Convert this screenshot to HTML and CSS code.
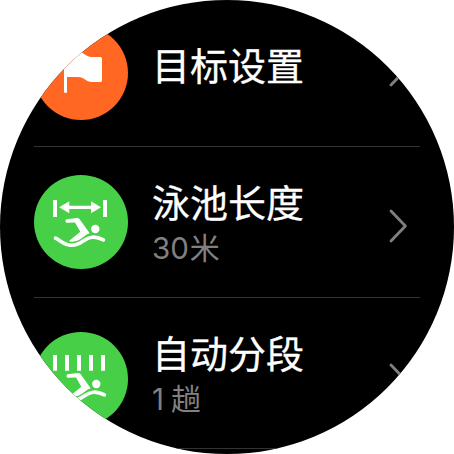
FILE: index.html
```html
<!DOCTYPE html>
<html lang="zh-CN">
<head>
<meta charset="utf-8">
<title>游泳设置</title>
<link rel="stylesheet" href="styles.css">
</head>
<body>
<main class="watch">
  <section class="row row-goal">
    <svg class="icon" viewBox="0 0 94 94">
      <circle class="orange" cx="47" cy="47" r="47"/>
      <path class="white" d="M30 22H44L47.5 26.3C51.5 28.8 53.5 31 57 31H66.5Q68 31 68 32.5V54.5Q68 56 66.5 56H58C52 56 50 51 44 51H33V66Q33 67 31.5 67T30 66Z"/>
    </svg>
    <div class="label"><h2 class="title">目标设置</h2></div>
    <svg class="chevron" viewBox="0 0 20 34"><path d="M3 2L17.4 17L3 32"/></svg>
  </section>
  <section class="row row-pool">
    <svg class="icon" viewBox="0 0 94 94">
      <circle class="green" cx="47" cy="47" r="47"/>
      <path class="white" d="M19 25h4v17h-4zM69 25h4v17h-4zM25.2 32.3L35.3 26.3V30.7H57V26.3L67 32.3L57 38.3V34H35.3V38.3Z"/>
      <g id="swimmer">
        <path class="white" d="M32.5 44.2L43.2 43Q44.7 43 45.5 44L55.7 58.2C50.5 60 47 65 41.5 66.3Q38 67 34.7 66.3L46.3 56.8L41 47.6L32.8 47.7C31.2 47.6 31.2 44.4 32.5 44.2Z"/>
        <circle class="white" cx="61.3" cy="54" r="4.2"/>
        <path class="wave" d="M21.5 63.2C26.5 65.3 30 70.5 38 70.3C47 70.2 50 62.9 58.5 62.2C63 61.8 66 63.2 69.4 64.9"/>
      </g>
    </svg>
    <div class="label"><h2 class="title">泳池长度</h2><p class="value">30<span class="unit">米</span></p></div>
    <svg class="chevron" viewBox="0 0 20 34"><path d="M3 2L17.4 17L3 32"/></svg>
  </section>
  <section class="row row-split">
    <svg class="icon" viewBox="0 0 94 94">
      <circle class="green" cx="47" cy="47" r="47"/>
      <path class="white" d="M19 23h4v15.7h-4zM31 23h4v15.7h-4zM43 23h4v15.7h-4zM55 23h4v15.7h-4zM67 23h4v15.7h-4z"/>
      <use href="#swimmer" x="1" y="-2"/>
    </svg>
    <div class="label"><h2 class="title">自动分段</h2><p class="value"><span class="one">1</span><span class="unit">趟</span></p></div>
    <svg class="chevron" viewBox="0 0 20 34"><path d="M3 2L17.4 17L3 32"/></svg>
  </section>
</main>
</body>
</html>
```
FILE: styles.css
```css
* { box-sizing: border-box; }
body { margin: 0; background: #fff; overflow: hidden; }
.watch {
  width: 454px;
  height: 454px;
  padding: 0 34px;
  overflow: hidden;
  clip-path: circle(50%);
  background: #000;
  font-family: "Noto Sans CJK SC", sans-serif;
}
.row {
  display: flex;
  align-items: flex-start;
  height: 151px;
  border-bottom: 1px solid #333;
}
.row-goal { margin-top: -4px; }
.icon { flex: none; width: 94px; height: 94px; margin-top: 28px; }
.row-goal .icon { margin-top: 30px; }
.row-split .icon { margin-top: 34px; }
.orange { fill: #ff6723; }
.green { fill: #48cf48; }
.white { fill: #fff; }
.wave { fill: none; stroke: #fff; stroke-width: 3.6; stroke-linecap: round; }
.label { flex: 1; padding: 33px 0 0 24px; white-space: nowrap; }
.row-goal .label { padding-top: 47px; }
.title {
  margin: 0;
  color: #fff;
  font-size: 38px;
  font-weight: 400;
  line-height: 42px;
  -webkit-text-stroke: 0.3px #fff;
}
.value {
  margin: 6px 0 0;
  color: #808080;
  font-family: Inter, "Noto Sans CJK SC", sans-serif;
  font-size: 29.5px;
  line-height: 40px;
}
.unit { margin-left: 1px; font-family: "Noto Sans CJK SC", sans-serif; font-size: 30px; line-height: 1; }
.one { display: inline-block; width: 18px; }
.chevron { flex: none; width: 20px; height: 34px; margin: 62px 12px 0 0; }
.row-goal .chevron { margin-top: 57px; }
.row-split .chevron { margin-top: 65px; }
.chevron path {
  fill: none;
  stroke: #808080;
  stroke-width: 2.8;
  stroke-linecap: round;
  stroke-linejoin: round;
}
```
